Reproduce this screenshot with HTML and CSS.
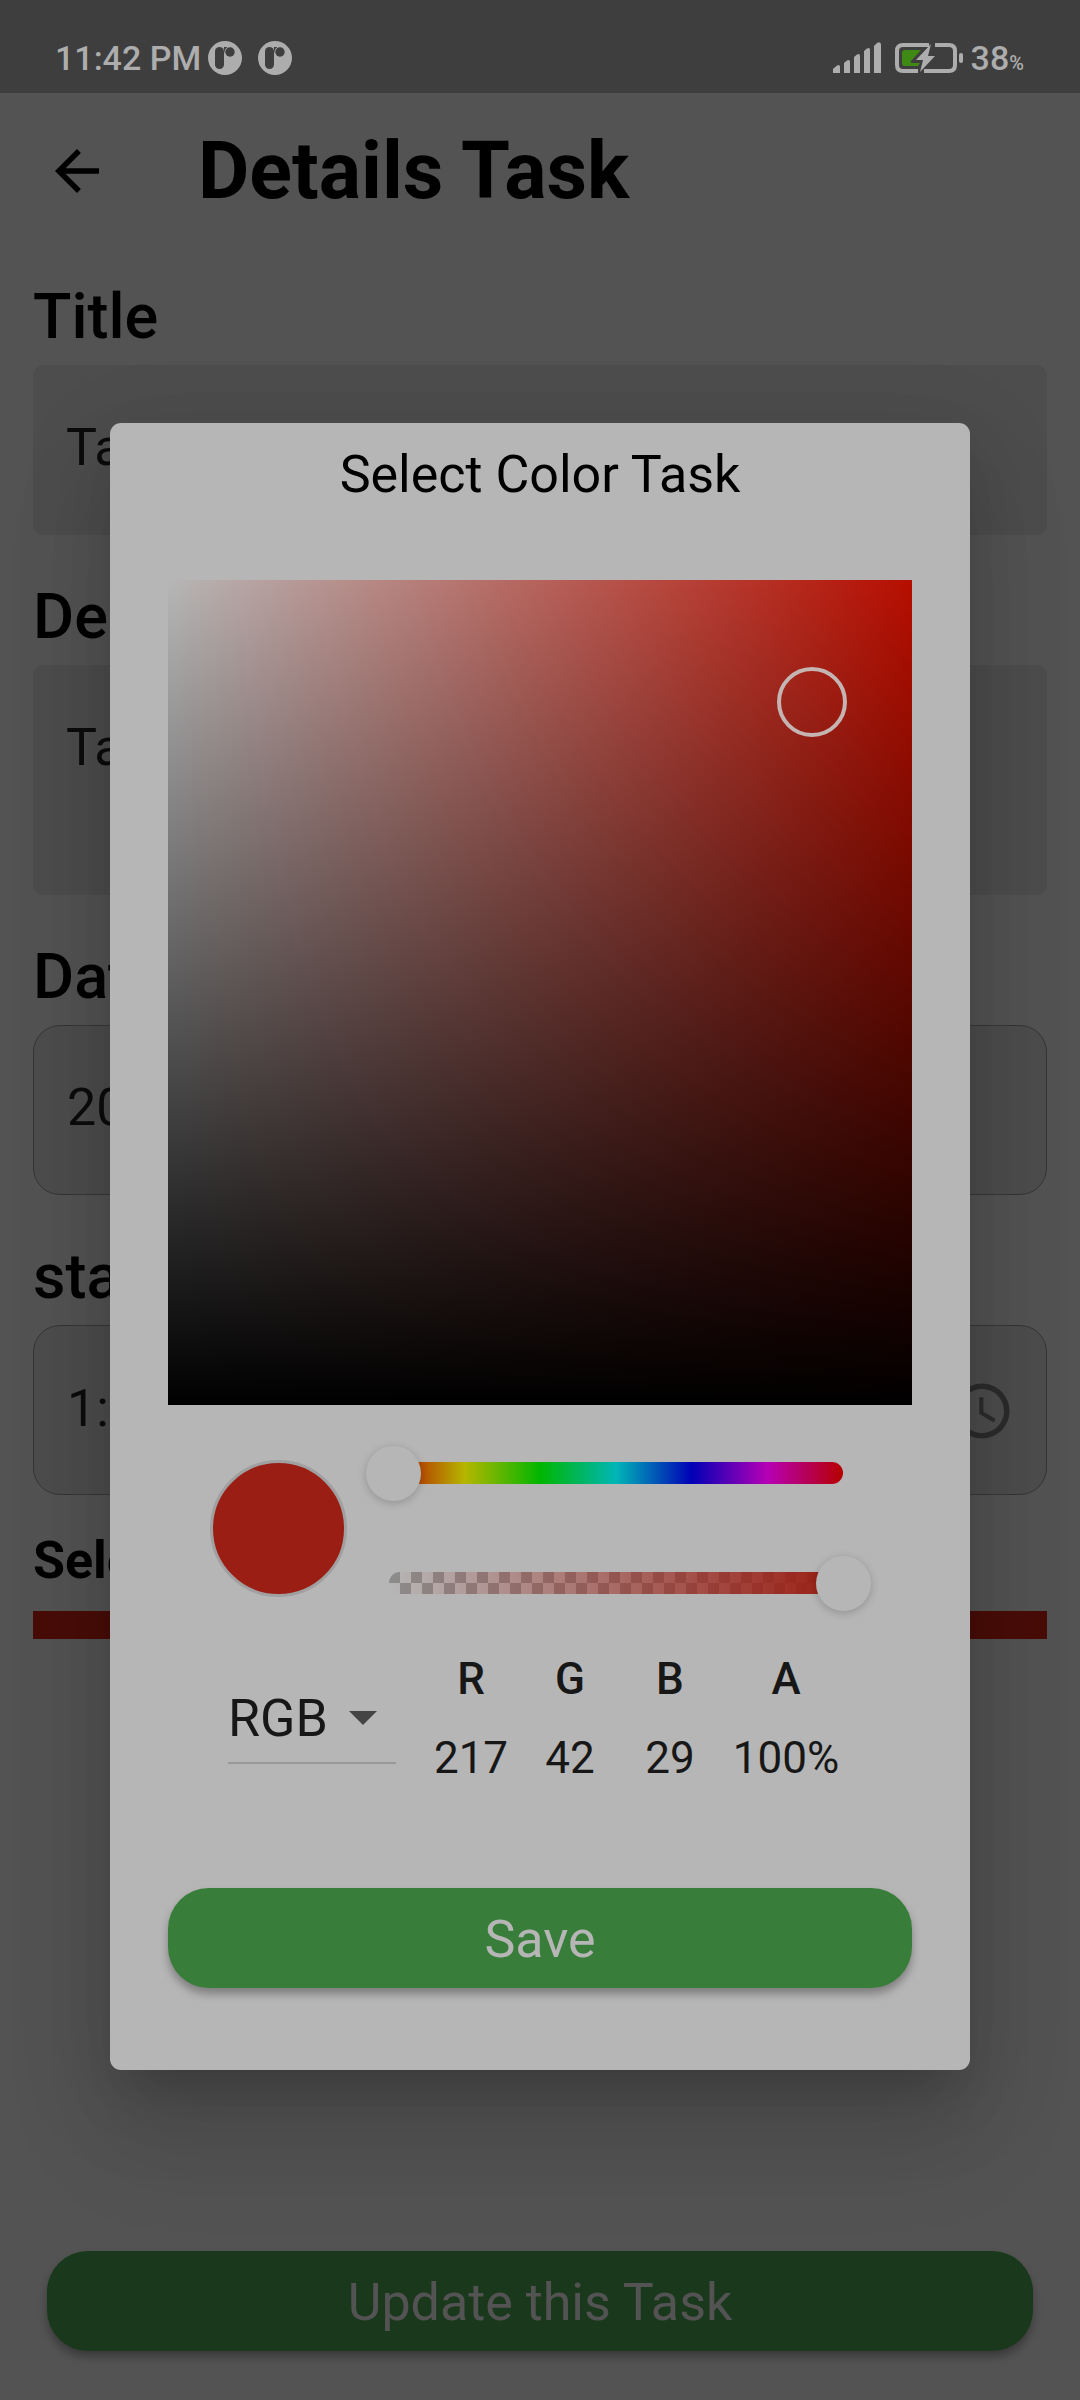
FILE: index.html
```html
<!DOCTYPE html>
<html lang="en">
<head>
<meta charset="utf-8">
<meta name="viewport" content="width=device-width">
<title>Details Task</title>
<link rel="stylesheet" href="styles.css">
</head>
<body>
<div class="app">
  <div class="status">
    <span class="status-text">11:42 PM</span>
    <svg class="notice" viewBox="0 0 34 34" aria-hidden="true"><circle cx="17" cy="17" r="17" fill="#adadad"/><rect x="7" y="6" width="9" height="22" rx="4.500" fill="#3e3e3e"/><path d="M16 6h3v3l-3 3z" fill="#3e3e3e"/><circle cx="22" cy="11" r="5.500" fill="#adadad"/><circle cx="22" cy="11" r="4.700" fill="#3e3e3e"/></svg>
    <svg class="notice notice-next" viewBox="0 0 34 34" aria-hidden="true"><circle cx="17" cy="17" r="17" fill="#adadad"/><rect x="7" y="6" width="9" height="22" rx="4.500" fill="#3e3e3e"/><path d="M16 6h3v3l-3 3z" fill="#3e3e3e"/><circle cx="22" cy="11" r="5.500" fill="#adadad"/><circle cx="22" cy="11" r="4.700" fill="#3e3e3e"/></svg>
    <svg class="signal" viewBox="0 0 48 31" aria-hidden="true"><g fill="#adadad"><path d="M0 27 L4 23.500Q7 22 7 25V31H0Z"/><path d="M11 21 L14 18.500Q17 17 17 20V31H11Z"/><path d="M21 15 L24 12.500Q27 11 27 14V31H21Z"/><path d="M31 9 L34 6.500Q37 5 37 8V31H31Z"/><path d="M41 4 L44 1Q48 -1 48 3V31H41Z"/></g></svg>
    <svg class="battery" viewBox="0 0 68 30" aria-hidden="true">
      <path d="M34 2H8Q2 2 2 8V22Q2 28 8 28H23M40 2H54Q60 2 60 8V22Q60 28 54 28H29" fill="none" stroke="#adadad" stroke-width="4"/>
      <path d="M10 7H26L16 18Q15 20 18 20H25L23 23H10Q7 23 7 20V10Q7 7 10 7Z" fill="#3f8a14"/>
      <path d="M36 1 L21 17H28L25 29 L40 13H33Z" fill="#adadad"/>
      <rect x="64" y="10" width="4" height="10" rx="2" fill="#adadad"/>
    </svg>
    <span class="status-text">38</span><span class="percent">%</span>
  </div>

  <header class="bar">
    <button class="back" type="button" aria-label="Back"><svg viewBox="0 0 24 24"><path d="M20 11H7.830l5.590-5.590L12 4l-8 8 8 8 1.410-1.410L7.830 13H20z"/></svg></button>
    <h1 class="bar-title">Details Task</h1>
  </header>

  <form class="form">
    <div class="field"><label class="label" for="title">Title</label><input class="input" id="title" type="text" value="Task"></div>
    <div class="field"><label class="label" for="desc">Description</label><textarea class="input input-tall" id="desc">Task</textarea></div>
    <div class="field"><label class="label" for="date">Date</label><input class="input input-line" id="date" type="text" value="2023"></div>
    <div class="field"><label class="label" for="start">start time</label>
      <div class="input input-line input-group"><input class="bare" id="start" type="text" value="1:00">
        <svg class="clock" viewBox="0 0 24 24" aria-hidden="true"><path d="M11.990 2C6.470 2 2 6.480 2 12s4.470 10 9.990 10C17.520 22 22 17.520 22 12S17.520 2 11.990 2zM12 20c-4.420 0-8-3.580-8-8s3.580-8 8-8 8 3.580 8 8-3.580 8-8 8zm.5-13H11v6l5.250 3.150.75-1.230-4.500-2.670z"/></svg>
      </div>
    </div>
    <div class="color-field"><span class="color-label">Select Color</span><button class="color-strip" type="button" aria-label="Select Color"></button></div>
    <button class="button update" type="submit">Update this Task</button>
  </form>
</div>

<div class="overlay">
  <section class="dialog" role="dialog" aria-labelledby="dialog-title">
    <h2 class="dialog-title" id="dialog-title">Select Color Task</h2>
    <div class="area"><span class="ring"></span></div>
    <div class="controls">
      <span class="swatch"></span>
      <div class="sliders">
        <div class="slider"><span class="track hue"></span><input class="range" type="range" aria-label="Hue" min="0" max="360" value="0"></div>
        <div class="slider"><span class="track alpha"></span><input class="range" type="range" aria-label="Alpha" min="0" max="100" value="100"></div>
      </div>
    </div>
    <div class="values">
      <div class="mode">
        <select class="select" aria-label="Color model"><option>RGB</option></select>
        <svg class="caret" viewBox="0 0 28 14" aria-hidden="true"><path d="M0 0H28L14 14Z"/></svg>
      </div>
      <table class="table">
        <colgroup><col class="col-r"><col class="col-g"><col class="col-g"><col class="col-a"></colgroup>
        <thead><tr><th>R</th><th>G</th><th>B</th><th>A</th></tr></thead>
        <tbody><tr><td>217</td><td>42</td><td>29</td><td>100%</td></tr></tbody>
      </table>
    </div>
    <button class="button save" type="button">Save</button>
  </section>
</div>
</body>
</html>
```
FILE: styles.css
```css
* { box-sizing: border-box; }

body {
  margin: 0;
  background: #535353;
  color: #000;
  font-family: Roboto, "Liberation Sans", sans-serif;
}

button, input, textarea, select {
  margin: 0;
  border: 0;
  font-family: inherit;
}

.app {
  display: flex;
  flex-direction: column;
  min-height: 100vh;
}

/* Status bar */
.status {
  display: flex;
  align-items: center;
  height: 93px;
  padding: 22px 56px 0 55px;
  background: #3e3e3e;
  color: #adadad;
}
.status-text { font-size: 34px; font-weight: 500; line-height: 40px; }
.notice { width: 34px; height: 34px; margin-left: 7px; }
.notice-next { margin-left: 16px; }
.signal { width: 48px; height: 31px; margin-left: auto; }
.battery { width: 68px; height: 30px; margin: 0 8px 0 14px; }
.percent { padding-top: 10px; font-size: 20px; font-weight: 500; line-height: 24px; }

/* App bar */
.bar {
  display: flex;
  align-items: center;
  height: 154px;
  padding: 2px 45px 0 44px;
  gap: 88px;
}
.back { width: 66px; height: 66px; padding: 0; background: none; }
.back svg { display: block; width: 66px; height: 66px; }
.bar-title { margin: 0; font-size: 79px; font-weight: 700; line-height: 94px; }

/* Form */
.form {
  display: flex;
  flex: 1;
  flex-direction: column;
  gap: 45px;
  padding: 33px 33px 49px;
}
.field { display: flex; flex-direction: column; gap: 11px; }
.label { font-size: 63px; font-weight: 500; line-height: 74px; }
.input {
  display: block;
  width: 100%;
  height: 170px;
  padding: 52px 33px 57px;
  border-radius: 11px;
  background: #4d4d4d;
  color: #0c0c0c;
  font-size: 52px;
  line-height: 61px;
}
.input-tall { height: 230px; resize: none; overflow: hidden; }
.input-line { border: 1px solid #363636; border-radius: 27px; }
.input-group { display: flex; align-items: flex-start; padding-right: 31px; }
.bare {
  flex: 1;
  min-width: 0;
  height: 61px;
  padding: 0;
  background: none;
  color: inherit;
  font-size: 52px;
}
.clock { flex: none; width: 66px; height: 66px; fill: #2c2c2c; }
.color-field { display: flex; flex-direction: column; gap: 20px; margin-top: -9px; }
.color-label { font-size: 52px; font-weight: 700; line-height: 60px; }
.color-strip { height: 28px; padding: 0; background: #490d08; }

.button {
  height: 100px;
  padding: 2px 0 0;
  border-radius: 41px;
  font-size: 52px;
  line-height: 61px;
}
.update {
  margin: auto 14px 0;
  background: #1a391c;
  color: #535353;
  box-shadow: 0 6px 8px rgba(0, 0, 0, 0.3);
}

/* Dialog */
.overlay {
  position: absolute;
  inset: 0;
  display: flex;
  align-items: center;
  padding: 93px 110px 0;
}
.dialog {
  display: flex;
  flex: 1;
  flex-direction: column;
  padding: 22px 58px 82px;
  border-radius: 11px;
  background: #b6b6b6;
  box-shadow: 0 30px 41px -19px rgba(0, 0, 0, 0.14), 0 66px 104px 8px rgba(0, 0, 0, 0.1), 0 25px 90px 10px rgba(0, 0, 0, 0.1);
}
.dialog-title {
  margin: 0 0 75px;
  font-size: 52px;
  font-weight: 400;
  line-height: 60px;
  text-align: center;
}
.area {
  position: relative;
  height: 825px;
  background: linear-gradient(to top, #000, transparent), linear-gradient(to right, #b6b6b6, #b60e00);
}
.ring {
  position: absolute;
  left: 86.600%;
  top: 14.800%;
  width: 70px;
  height: 70px;
  margin: -35px;
  border: 4px solid #c4b4b2;
  border-radius: 50%;
}
.controls {
  display: flex;
  align-items: center;
  gap: 19px;
  height: 220px;
  margin-top: 13px;
  padding: 0 41px 0 42px;
}
.swatch {
  flex: none;
  width: 137px;
  height: 137px;
  border: 3px solid #a0a0a0;
  border-radius: 50%;
  background: #9b1e14;
}
.sliders { flex: 1; }
.slider { display: grid; align-items: center; height: 110px; }
.slider > * { grid-area: 1 / 1; }
.track { height: 22px; margin: 0 28px 0 23px; border-radius: 11px; }
.hue { background: linear-gradient(to right, #b60000, #b6b600, #00b600, #00b6b6, #0000b6, #b600b6, #b60000); }
.alpha {
  background:
    linear-gradient(to right, rgba(155, 30, 20, 0), #9b1e14),
    repeating-conic-gradient(#b6b6b6 0 25%, #8c8c8c 0 50%) 0 0 / 22px 22px;
}
.range {
  width: 100%;
  height: 55px;
  appearance: none;
  background: none;
}
.range::-webkit-slider-runnable-track { height: 55px; }
.range::-webkit-slider-thumb {
  width: 55px;
  height: 55px;
  appearance: none;
  border-radius: 50%;
  background: #b6b6b6;
  box-shadow: 0 2px 8px rgba(0, 0, 0, 0.2);
}

.values { display: flex; align-items: center; gap: 26px; margin-top: 2px; padding-left: 60px; }
.mode {
  display: grid;
  align-items: center;
  width: 168px;
  height: 90px;
  border-bottom: 2px solid #989898;
}
.mode > * { grid-area: 1 / 1; }
.select {
  width: 100%;
  height: 88px;
  padding: 0;
  appearance: none;
  background: none;
  color: #171717;
  font-size: 52px;
}
.caret { justify-self: end; width: 28px; height: 14px; margin-right: 19px; fill: #444; pointer-events: none; }
.table {
  width: 430px;
  border-collapse: collapse;
  table-layout: fixed;
  color: #171717;
  font-size: 44px;
  line-height: 79px;
  text-align: center;
}
.table th, .table td { padding: 0; }
.table th { font-weight: 500; }
.col-r { width: 98px; }
.col-g { width: 100px; }
.col-a { width: 132px; }
.save {
  margin-top: 90px;
  background: #387e3a;
  color: #b6b6b6;
  box-shadow: 0 6px 8px rgba(0, 0, 0, 0.3);
}
```
